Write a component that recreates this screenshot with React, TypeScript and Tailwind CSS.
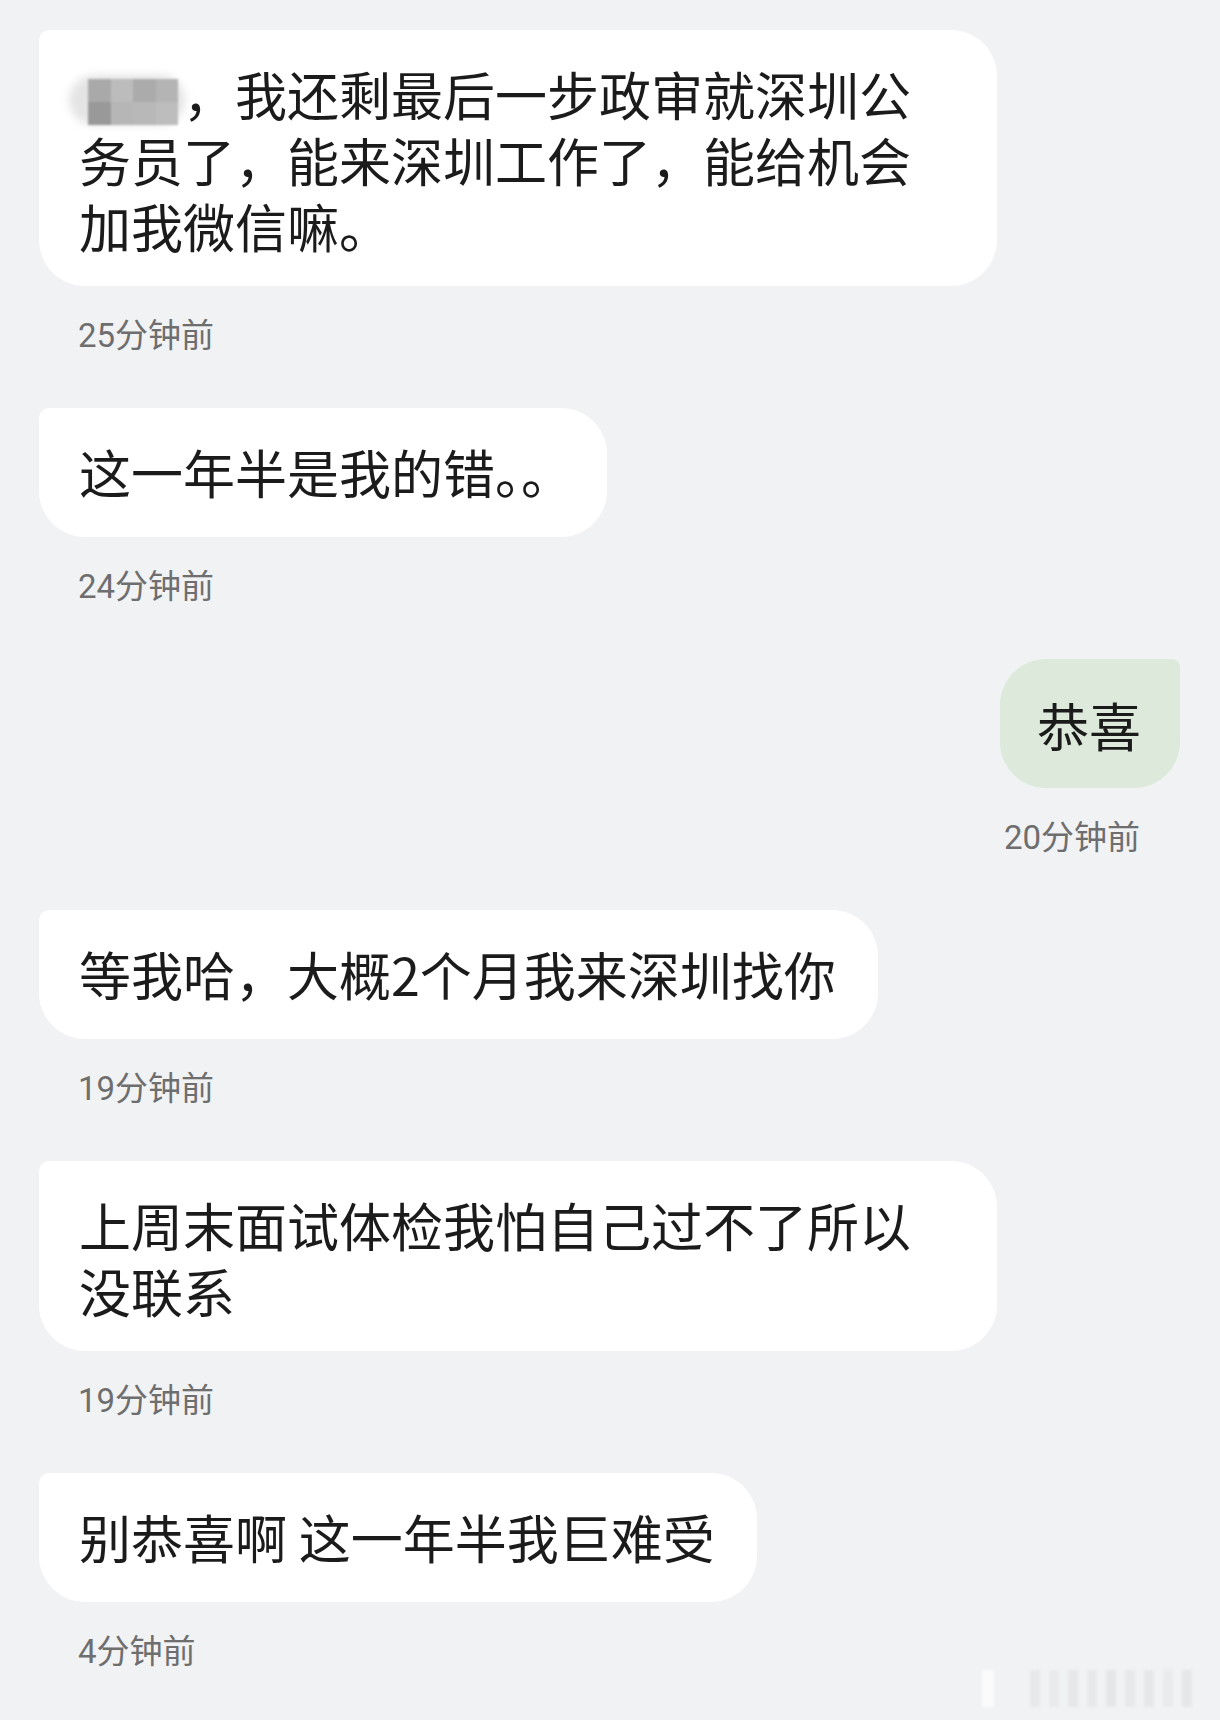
import React from "react";

const FONT = "font-['Noto_Sans_CJK_SC','Noto_Sans',sans-serif]";

function Name() {
  return (
    <span className="relative inline-block w-[104px] h-[52px] align-[-9px]">
      <span className="absolute left-[-10px] top-[2px] w-[116px] h-[50px] rounded-full bg-[#e4e4e4] blur-[4px]" />
      <span className="absolute left-[9px] top-[6px] grid grid-cols-4 w-[90px] h-[46px] blur-[1px]">
        <span className="bg-[#a9a9a9]" />
        <span className="bg-[#bcbcbc]" />
        <span className="bg-[#ababab]" />
        <span className="bg-[#b4b4b4]" />
        <span className="bg-[#999999]" />
        <span className="bg-[#b6b6b6]" />
        <span className="bg-[#b8b8b8]" />
        <span className="bg-[#bdbdbd]" />
      </span>
    </span>
  );
}

function Left({ children, time }: { children: React.ReactNode; time: string }) {
  return (
    <div className="flex flex-col items-start">
      <div className="max-w-[958px] min-h-[129px] bg-white rounded-[46px] rounded-tl-[10px] pl-[40px] pr-[42px] pt-[31px] pb-[27px] text-[52px] leading-[66px] text-[#1b1b1b]">
        {children}
      </div>
      <div className="mt-[32px] pl-[39px] text-[33px] leading-[36px] text-[#6e6e6e] font-['Roboto','Noto_Sans_CJK_SC',sans-serif]">
        {time}
      </div>
    </div>
  );
}

export default function App() {
  return (
    <div className={`relative min-h-[1720px] w-[1220px] bg-[#f1f2f4] ${FONT}`}>
      <div className="flex flex-col gap-[54px] pl-[39px] pr-[40px] pt-[30px]">
        <Left time="25分钟前">
          <Name />，我还剩最后一步政审就深圳公务员了，能来深圳工作了，能给机会加我微信嘛。
        </Left>
        <Left time="24分钟前">
          这一年半是我的错<span className="pr-[18px] [font-feature-settings:'halt']">。。</span>
        </Left>
        <div className="flex flex-col items-end">
          <div className="bg-[#dce9db] min-h-[129px] rounded-[46px] rounded-tr-[8px] pl-[37px] pr-[39px] pt-[33px] pb-[30px] text-[52px] leading-[66px] text-[#1b1b1b]">
            恭喜
          </div>
          <div className="mt-[32px] pr-[40px] text-[33px] leading-[36px] text-[#6e6e6e] font-['Roboto','Noto_Sans_CJK_SC',sans-serif]">
            20分钟前
          </div>
        </div>
        <Left time="19分钟前">等我哈，大概2个月我来深圳找你</Left>
        <Left time="19分钟前">上周末面试体检我怕自己过不了所以没联系</Left>
        <Left time="4分钟前">别恭喜啊 这一年半我巨难受</Left>
      </div>
      <div className="absolute left-[982px] top-[1670px] flex items-stretch gap-[9px] h-[37px] blur-[1.5px]">
        <div className="w-[12px] bg-[#fbfbfc]" />
        <div className="w-[18px]" />
        <div className="w-[10px] bg-[#e7e8ea]" />
        <div className="w-[10px] bg-[#e9eaec]" />
        <div className="w-[10px] bg-[#e6e7e9]" />
        <div className="w-[10px] bg-[#e8e9eb]" />
        <div className="w-[10px] bg-[#e5e6e8]" />
        <div className="w-[10px] bg-[#e7e8ea]" />
        <div className="w-[10px] bg-[#e6e7e9]" />
        <div className="w-[10px] bg-[#e9eaec]" />
        <div className="w-[10px] bg-[#e5e6e8]" />
      </div>
    </div>
  );
}
